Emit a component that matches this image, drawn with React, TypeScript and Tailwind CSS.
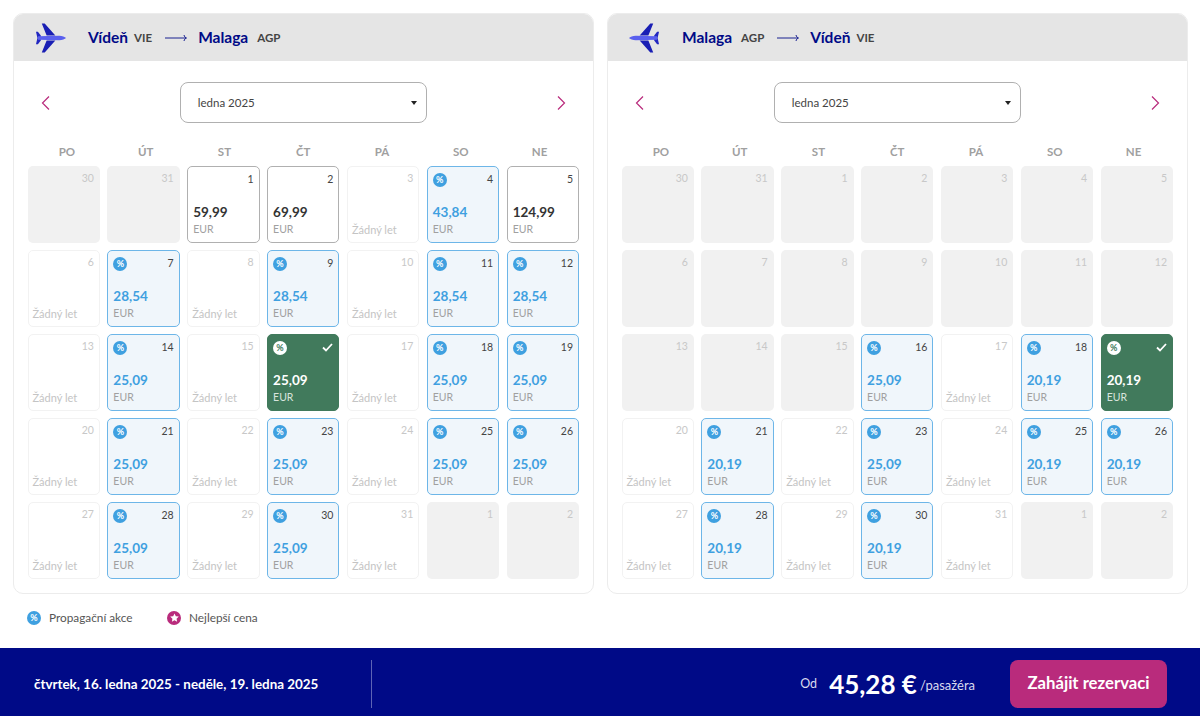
// Flight calendar picker: outbound and return month grids with a price bar

type Day = {
  n: number;
  kind: "off" | "none" | "plain" | "promo" | "selected";
  price?: string;
};

const off = (n: number): Day => ({ n, kind: "off" });
const none = (n: number): Day => ({ n, kind: "none" });
const plain = (n: number, price: string): Day => ({ n, kind: "plain", price });
const promo = (n: number, price: string): Day => ({ n, kind: "promo", price });
const selected = (n: number, price: string): Day => ({ n, kind: "selected", price });

const weekdays = ["PO", "ÚT", "ST", "ČT", "PÁ", "SO", "NE"];

const outbound: Day[] = [
  off(30), off(31), plain(1, "59,99"), plain(2, "69,99"), none(3), promo(4, "43,84"), plain(5, "124,99"),
  none(6), promo(7, "28,54"), none(8), promo(9, "28,54"), none(10), promo(11, "28,54"), promo(12, "28,54"),
  none(13), promo(14, "25,09"), none(15), selected(16, "25,09"), none(17), promo(18, "25,09"), promo(19, "25,09"),
  none(20), promo(21, "25,09"), none(22), promo(23, "25,09"), none(24), promo(25, "25,09"), promo(26, "25,09"),
  none(27), promo(28, "25,09"), none(29), promo(30, "25,09"), none(31), off(1), off(2),
];

const inbound: Day[] = [
  off(30), off(31), off(1), off(2), off(3), off(4), off(5),
  off(6), off(7), off(8), off(9), off(10), off(11), off(12),
  off(13), off(14), off(15), promo(16, "25,09"), none(17), promo(18, "20,19"), selected(19, "20,19"),
  none(20), promo(21, "20,19"), none(22), promo(23, "25,09"), none(24), promo(25, "20,19"), promo(26, "20,19"),
  none(27), promo(28, "20,19"), none(29), promo(30, "20,19"), none(31), off(1), off(2),
];

function Plane({ flip }: { flip?: boolean }) {
  return (
    <svg width="31" height="32" viewBox="0 0 32 32" className={flip ? "-scale-x-100" : ""}>
      <path d="M7 1 L10 1 L21 13.5 L12 13.5 Z M12 18.5 L21 18.5 L10 31 L7 31 Z" fill="#1a1fb4" />
      <path d="M1 9.5 L3 9.5 L6 13.5 L6 18.5 L3 22.5 L1 22.5 L2.5 16 Z" fill="#2227c0" />
      <path d="M3 14.2 L25 13.8 C28 13.8 31 15 32 16 C31 17 28 18.2 25 18.2 L3 17.8 Z" fill="#5a60ee" />
    </svg>
  );
}

function Arrow() {
  return (
    <svg width="22" height="10" viewBox="0 0 22 10" fill="none" stroke="#000a87" strokeWidth="0.9">
      <path d="M0 5 H21 M19 2 C19.4 3.6 20.2 4.6 21.5 5 C20.2 5.4 19.4 6.4 19 8" />
    </svg>
  );
}

function Chevron({ dir }: { dir: "left" | "right" }) {
  return (
    <svg width="10" height="16" viewBox="0 0 10 16" fill="none" stroke="#b92b7c" strokeWidth="1.2">
      <path d={dir === "left" ? "M8 1.5 L1.5 8 L8 14.5" : "M2 1.5 L8.5 8 L2 14.5"} />
    </svg>
  );
}

function PercentBadge({ inverted }: { inverted?: boolean }) {
  return (
    <span
      className={`flex h-[14px] w-[14px] items-center justify-center rounded-full text-[9px] leading-none font-bold ${
        inverted ? "bg-white text-[#417a5c]" : "bg-[#3fa0e0] text-white"
      }`}
    >
      %
    </span>
  );
}

function Cell({ day }: { day: Day }) {
  if (day.kind === "off") {
    return (
      <div className="flex h-[77px] justify-end rounded-[5px] bg-[#f1f1f1] pt-[5px] pr-[6px] text-[10.5px] leading-[15px] text-[#c8c8c8]">
        {day.n}
      </div>
    );
  }

  if (day.kind === "none") {
    return (
      <div className="flex h-[77px] flex-col justify-between rounded-[5px] border border-[#f2f2f2] pt-[4px] pr-[5px] pb-[4px] pl-[4px]">
        <div className="text-right text-[10.5px] leading-[15px] text-[#c8c8c8]">{day.n}</div>
        <div className="text-[11px] leading-[16px] text-[#c4c4c4]">Žádný let</div>
      </div>
    );
  }

  const box = {
    plain: "border-[#b0b0b0] bg-white",
    promo: "border-[#6db6e8] bg-[#f0f6fb]",
    selected: "border-[#417a5c] bg-[#417a5c]",
  }[day.kind];
  const priceColor = {
    plain: "text-[#333333]",
    promo: "text-[#3fa0e0]",
    selected: "text-white",
  }[day.kind];
  const numberColor = day.kind === "selected" ? "text-white" : "text-[#444444]";
  const currencyColor = day.kind === "selected" ? "text-[#d8e4dd]" : "text-[#a0a0a0]";

  return (
    <div className={`flex h-[77px] flex-col rounded-[5px] border pt-[5px] pr-[5px] pl-[5px] ${box}`}>
      <div className="flex h-[15px] items-center justify-between">
        {day.kind === "plain" ? <span /> : <PercentBadge inverted={day.kind === "selected"} />}
        {day.kind === "selected" ? (
          <svg width="11" height="9" viewBox="0 0 11 9" fill="none" stroke="white" strokeWidth="1.8">
            <path d="M1 4.5 L4 7.5 L10 1" />
          </svg>
        ) : (
          <span className={`text-[10.5px] leading-[15px] ${numberColor}`}>{day.n}</span>
        )}
      </div>
      <div className={`mt-[16px] text-[13.5px] leading-[19px] font-bold ${priceColor}`}>{day.price}</div>
      <div className={`text-[10.5px] leading-[14px] ${currencyColor}`}>EUR</div>
    </div>
  );
}

function Panel({
  from,
  fromCode,
  to,
  toCode,
  days,
  flip,
}: {
  from: string;
  fromCode: string;
  to: string;
  toCode: string;
  days: Day[];
  flip?: boolean;
}) {
  const codeGap = (code: string) => (code === "AGP" ? "ml-[9px]" : "ml-[6px]");

  return (
    <section className="h-[581px] w-[581px] overflow-hidden rounded-[10px] border border-[#ececec] bg-white">
      <header className="flex h-[47px] items-center bg-[#e5e5e5] pl-[21px]">
        <Plane flip={flip} />
        <div className="ml-[22px] flex items-center">
          <span className="text-[15.5px] font-bold text-[#000a87]">{from}</span>
          <span className={`text-[11.5px] font-bold text-[#444444] ${codeGap(fromCode)}`}>{fromCode}</span>
          <span className="mr-[11px] ml-[13px] flex">
            <Arrow />
          </span>
          <span className="text-[15.5px] font-bold text-[#000a87]">{to}</span>
          <span className={`text-[11.5px] font-bold text-[#444444] ${codeGap(toCode)}`}>{toCode}</span>
        </div>
      </header>

      <div className="pr-[14px] pl-[13.5px]">
        <div className="mt-[21px] flex items-center justify-between px-[13px]">
          <Chevron dir="left" />
          <div className="flex h-[41px] w-[247px] items-center justify-between rounded-[8px] border border-[#b0b0b0] pr-[9px] pl-[17px] text-[11.5px] text-[#444444]">
            <span className="pt-[1px]">ledna 2025</span>
            <span className="h-0 w-0 border-x-[3px] border-t-[4px] border-x-transparent border-t-[#222222]" />
          </div>
          <Chevron dir="right" />
        </div>

        <div className="mt-[21px] grid grid-cols-7">
          {weekdays.map((w) => (
            <div key={w} className="text-center text-[11.5px] leading-[16px] font-bold text-[#a0a0a0]">
              {w}
            </div>
          ))}
        </div>

        <div className="mt-[6px] grid grid-cols-7 gap-x-[7.5px] gap-y-[7px]">
          {days.map((d, i) => (
            <Cell key={i} day={d} />
          ))}
        </div>
      </div>
    </section>
  );
}

export default function App() {
  return (
    <div className="flex h-[716px] w-[1200px] flex-col bg-white font-['Lato',sans-serif]">
      <div className="flex gap-[13px] pt-[13px] pl-[13px]">
        <Panel from="Vídeň" fromCode="VIE" to="Malaga" toCode="AGP" days={outbound} />
        <Panel from="Malaga" fromCode="AGP" to="Vídeň" toCode="VIE" days={inbound} flip />
      </div>

      <div className="flex flex-1 items-center pb-[7px] pl-[27px] text-[11.8px] whitespace-nowrap text-[#555555]">
        <span className="flex h-[14px] w-[14px] items-center justify-center rounded-full bg-[#3fa0e0] text-[9px] font-bold text-white">
          %
        </span>
        <span className="ml-[8px] w-[83px]">Propagační akce</span>
        <span className="ml-[35px] flex h-[14px] w-[14px] items-center justify-center rounded-full bg-[#b92b7c]">
          <svg width="9" height="9" viewBox="0 0 24 24" fill="white">
            <path d="M12 1 L15.5 8.5 L23.5 9.5 L17.5 15 L19 23 L12 19 L5 23 L6.5 15 L0.5 9.5 L8.5 8.5 Z" />
          </svg>
        </span>
        <span className="ml-[8px]">Nejlepší cena</span>
      </div>

      <footer className="flex h-[68px] items-center bg-[#000a87] pt-[4px] text-white">
        <div className="w-[372px] border-r border-[#5d64b5] pl-[34px] text-[13.4px] leading-[48px] font-bold">
          čtvrtek, 16. ledna 2025 - neděle, 19. ledna 2025
        </div>
        <div className="ml-auto flex items-center pr-[33px]">
          <span className="text-[12.5px] text-[#d9dbef]">Od</span>
          <span className="ml-[12px] text-[26px] leading-none font-bold">45,28 €</span>
          <span className="ml-[3px] pt-[4px] text-[13px] text-[#d9dbef]">/pasažéra</span>
          <button className="ml-[35px] h-[48px] w-[157px] rounded-[8px] bg-[#b92b7c] text-[16.7px] font-bold text-white">
            Zahájit rezervaci
          </button>
        </div>
      </footer>
    </div>
  );
}
